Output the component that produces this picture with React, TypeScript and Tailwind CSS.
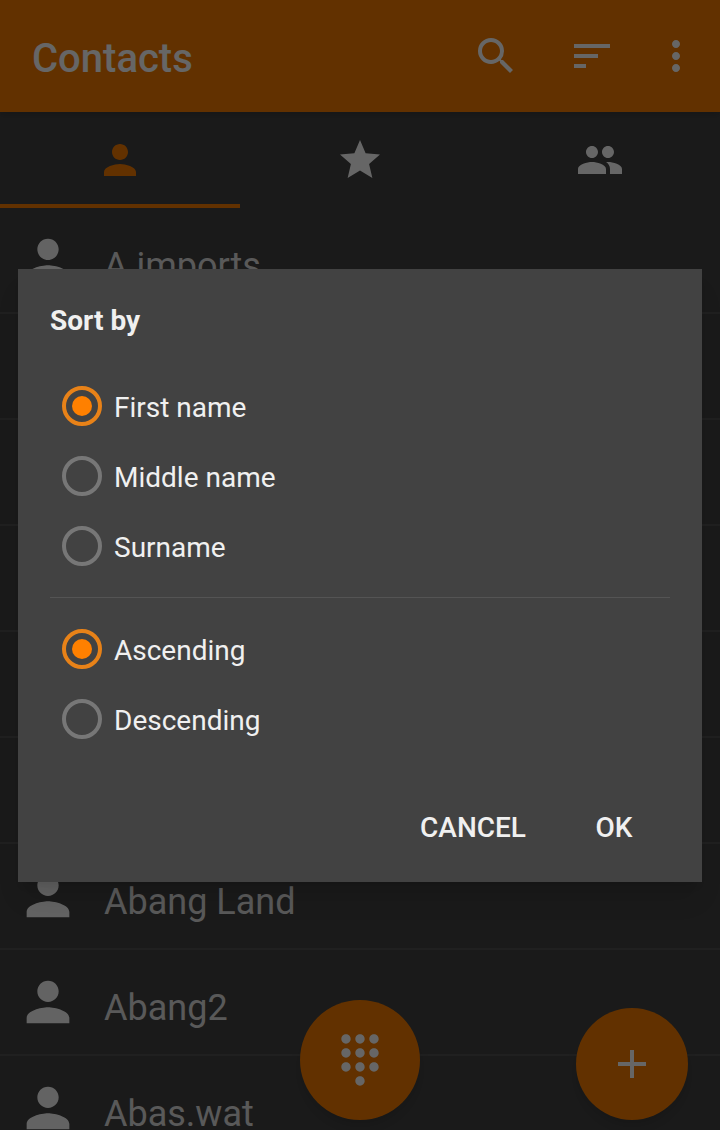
import { useState } from "react";
import { MdAdd, MdDialpad, MdGroup, MdMoreVert, MdPerson, MdSearch, MdSort, MdStar } from "react-icons/md";

const contacts = ["A imports", "", "", "", "", "", "Abang Land", "Abang2", "Abas.wat"];
const sortFields = ["First name", "Middle name", "Surname"];
const sortOrders = ["Ascending", "Descending"];

function Header() {
  return (
    <header className="relative flex h-28 shrink-0 items-center bg-[#f57c00] pl-8 pr-2 text-white shadow-md">
      <h1 className="grow pt-1.5 text-[40px] leading-[48px] font-medium">Contacts</h1>
      <button aria-label="Search" className="flex w-24 justify-center">
        <MdSearch size={48} />
      </button>
      <button aria-label="Sort" className="flex w-24 justify-center">
        <MdSort size={48} />
      </button>
      <button aria-label="More options" className="flex w-[72px] justify-center">
        <MdMoreVert size={48} />
      </button>
    </header>
  );
}

function Tabs() {
  return (
    <nav className="grid h-24 shrink-0 grid-cols-3 text-white">
      <button aria-label="Contacts" className="flex items-center justify-center border-b-4 border-[#f57c00] pt-1 text-[#f57c00]">
        <MdPerson size={48} />
      </button>
      <button aria-label="Favorites" className="flex items-center justify-center">
        <MdStar size={48} />
      </button>
      <button aria-label="Groups" className="flex items-center justify-center">
        <MdGroup size={48} />
      </button>
    </nav>
  );
}

function ContactList() {
  return (
    <ul>
      {contacts.map((name, i) => (
        <li key={i} className="flex h-[106px] items-center gap-6 border-b-2 border-[#505050] px-4">
          <MdPerson size={64} className="shrink-0 text-[#f8f8f8]" />
          <span className="pt-3 text-[36px] leading-[44px] text-[#dedede]">{name}</span>
        </li>
      ))}
    </ul>
  );
}

type RadioGroupProps = {
  name: string;
  options: string[];
  value: string;
  onChange: (value: string) => void;
};

function RadioGroup({ name, options, value, onChange }: RadioGroupProps) {
  return (
    <fieldset aria-label={name}>
      {options.map((option) => (
        <label key={option} className="flex h-[70px] items-center gap-3 pl-3 text-[28px] leading-8">
          <input
            type="radio"
            name={name}
            checked={value === option}
            onChange={() => onChange(option)}
            className="size-10 appearance-none rounded-full border-4 border-[#777777] bg-clip-content p-[6px] checked:border-[#e88218] checked:bg-[#ff8000]"
          />
          <span className="pt-1">{option}</span>
        </label>
      ))}
    </fieldset>
  );
}

function SortDialog() {
  const [field, setField] = useState("First name");
  const [order, setOrder] = useState("Ascending");

  return (
    <div role="dialog" aria-label="Sort by" className="w-full bg-[#424242] px-8 pt-9 pb-4 text-[#f0f0f0] shadow-xl">
      <h2 className="mb-[34px] text-[28px] leading-8 font-bold">Sort by</h2>
      <RadioGroup name="field" options={sortFields} value={field} onChange={setField} />
      <hr className="my-4 border-[#545454]" />
      <RadioGroup name="order" options={sortOrders} value={order} onChange={setOrder} />
      <div className="mt-8 -mr-2 flex justify-end text-[28px] leading-8 font-medium">
        <button className="h-20 px-6 pt-1">CANCEL</button>
        <button className="h-20 w-32 pt-1">OK</button>
      </div>
    </div>
  );
}

export default function App() {
  return (
    <div className="relative flex h-screen flex-col overflow-hidden bg-[#424242] font-['Roboto',sans-serif]">
      <Header />
      <Tabs />
      <ContactList />
      <button
        aria-label="Dialpad"
        className="absolute bottom-[10px] left-1/2 flex size-[120px] -translate-x-1/2 items-center justify-center rounded-full bg-[#f57c00] text-white shadow-lg"
      >
        <MdDialpad size={56} />
      </button>
      <button
        aria-label="Add contact"
        className="absolute right-8 bottom-[10px] flex size-28 items-center justify-center rounded-full bg-[#f57c00] text-white shadow-lg"
      >
        <MdAdd size={48} />
      </button>
      <div className="absolute inset-0 flex items-center bg-black/60 px-[18px] pt-5">
        <SortDialog />
      </div>
    </div>
  );
}
